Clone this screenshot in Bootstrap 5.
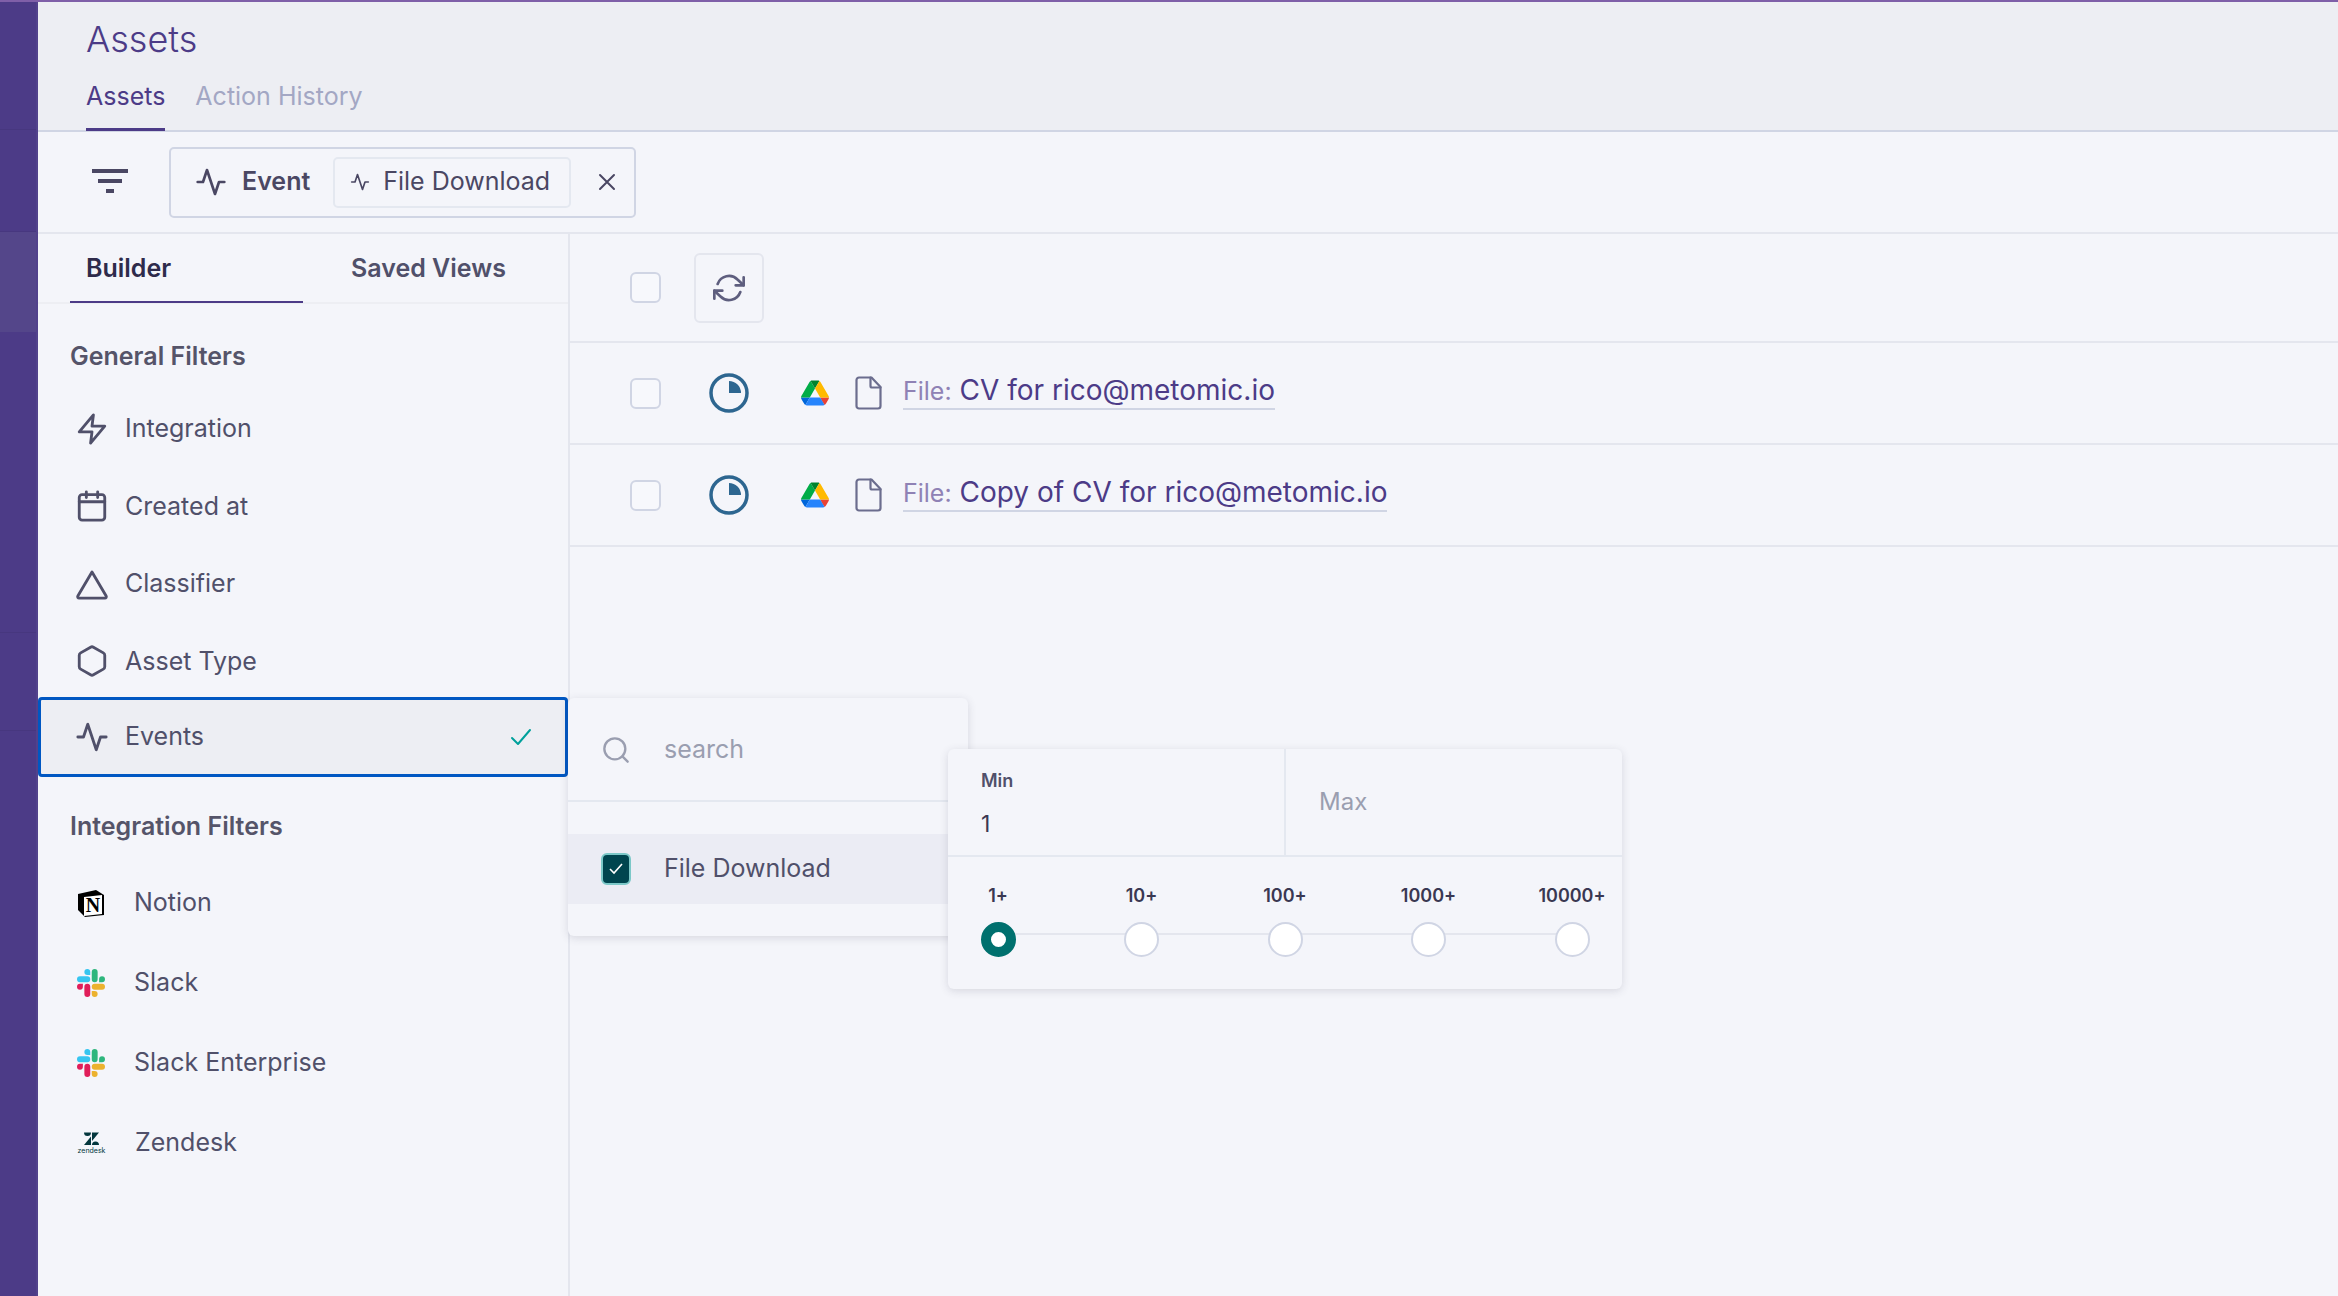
<!DOCTYPE html>
<html lang="en">
<head>
    <meta charset="UTF-8">
    <title>Assets</title>
    <meta name="viewport" content="width=device-width, initial-scale=1">
    <link href="https://cdn.jsdelivr.net/npm/bootstrap@5.3.0/dist/css/bootstrap.min.css" rel="stylesheet">
    <style>
        /* page frame */
        html, body { height: 100%; }
        body {
            background: #f4f5fa;
            color: #50506a;
            font-family: "Inter", "Liberation Sans", sans-serif;
            font-size: 25px;
            overflow: hidden;
        }
        .page-frame { height: 100vh; border-top: 2px solid #7f5fa8; }
        .ico { fill: none; stroke: currentColor; stroke-width: 2; stroke-linecap: round; stroke-linejoin: round; flex: none; }

        /* purple rail */
        .side-rail { width: 38px; flex: none; background: #4c3b87; border-right: 2px solid #52428c; }
        .rail-slot { border-bottom: 1px solid #47377f; }
        .rail-top { height: 128px; }
        .rail-mid { height: 102px; }
        .rail-on { height: 100px; background: #54468a; border-bottom: 0; }
        .rail-a { height: 301px; }
        .rail-b { height: 98px; }

        /* header */
        .top-head { height: 130px; flex: none; background: #edeef3; border-bottom: 2px solid #d0d5e4; padding: 0 48px; }
        .head-title { color: #4c3b87; font-size: 36px; font-weight: 300; line-height: 48px; margin: 13px 0 0; }
        .head-tabs { gap: 30px; margin-top: 9px; }
        .head-tab { color: #a3a7c4; font-size: 25px; font-weight: 400; line-height: 35px; height: 59px; padding-top: 7px; text-decoration: none; }
        .head-tab.is-on { color: #4c3b87; border-bottom: 3px solid #4c3b87; }

        /* filter bar */
        .filter-bar { height: 102px; flex: none; border-bottom: 2px solid #e4e6ee; padding-left: 54px; }
        .filter-lines { width: 36px; color: #4a4763; margin-right: 42px; }
        .filter-chip { height: 71px; width: 467px; margin-left: -1px; border: 2px solid #d0d5e4; border-radius: 5px; padding: 0 12px 0 24px; color: #4a4763; }
        .filter-chip strong { font-weight: 600; margin: 0 23px 0 15px; }
        .value-chip { height: 51px; width: 238px; border: 2px solid #e4e8f0; border-radius: 5px; padding-left: 15px; margin-right: 26px; font-weight: 400; }
        .value-chip svg { margin-right: 13px; }

        /* sidebar */
        .work-area { min-height: 0; }
        .side-panel { width: 532px; flex: none; border-right: 2px solid #e4e6ee; }
        .side-tabs { height: 70px; border-bottom: 2px solid #edeef3; padding-left: 32px; }
        .side-tab { width: 233px; height: 69px; padding: 16px 0 0 16px; font-weight: 600; color: #50506a; text-decoration: none; font-size: 25px; }
        .side-tab.is-on { color: #2e2b4b; border-bottom: 2px solid #4c3b87; }
        .side-tab + .side-tab { padding-left: 48px; }
        .group-label { font-size: 25px; font-weight: 600; color: #555469; margin: 0; padding-left: 32px; line-height: 32px; }
        .group-general { margin-top: 36px; margin-bottom: 18px; }
        .group-integration { margin-top: 33px; margin-bottom: 21px; }
        .filter-list { --bs-list-group-bg: transparent; --bs-list-group-border-width: 0; --bs-list-group-color: #50506a; }
        .filter-item { height: 77.5px; display: flex; align-items: center; padding: 0 0 0 37px; font-weight: 400; }
        .filter-item .ico { margin-right: 16px; color: #50506a; }
        .filter-item.is-open { height: 80px; background: #edeef3; box-shadow: inset 0 0 0 3px #0057c2; border-radius: 4px; margin-top: -3px; }
        .filter-item .filter-tick { margin-left: auto; margin-right: 36px; color: #00a09b; }
        .app-item { height: 80px; padding-left: 39px; }
        .app-item svg { margin-right: 29px; flex: none; }

        /* assets table */
        .asset-pane { min-width: 0; }
        .asset-row { height: 102px; border-bottom: 2px solid #e4e6ee; padding-left: 60px; }
        .asset-tools { height: 109px; }
        .asset-tick.form-check-input { width: 31px; height: 31px; margin: 0; border: 2px solid #d0d5e4; border-radius: 6px; background-color: #f7f8fc; flex: none; }
        .refresh-btn { width: 70px; height: 70px; margin-left: 33px; padding: 0; border: 2px solid #e4e6ee; border-radius: 6px; color: #5e5e7e; background: transparent; }
        .status-clock { margin-left: 48px; margin-right: 52px; flex: none; }
        .type-file { margin: 0 21px 0 26px; color: #6b6d8e; stroke-width: 2.2; }
        .asset-link { font-size: 28px; font-weight: 400; line-height: 34px; color: #4c3b87; text-decoration: none; border-bottom: 2px solid #d0d5e4; margin-top: -4px; }
        .asset-link span { color: #8f82b5; font-size: 25px; }

        /* popups */
        .float-card { position: absolute; background: #f4f5fa; border-radius: 6px; box-shadow: 0 2px 8px rgba(60, 60, 90, .16); }
        .search-card { left: -2px; top: 464px; width: 400px; height: 238px; }
        .search-line { height: 104px; border-bottom: 2px solid #e4e8f0; padding-left: 34px; padding-top: 2px; color: #9a9eb0; font-weight: 400; }
        .search-line .ico { margin-right: 34px; }
        .option-line { height: 70px; margin-top: 32px; background: #ebecf4; padding-left: 33px; font-weight: 400; }
        .option-tick { width: 30px; height: 32px; border-radius: 6px; background: #00454f; border: 2px solid #7cc8c8; margin-right: 33px; }
        .range-card { left: 378px; top: 515px; width: 674px; height: 240px; }
        .range-top { height: 108px; border-bottom: 2px solid #e4e8f0; }
        .range-cell { flex: 1 1 0; padding: 0 33px; }
        .range-cell + .range-cell { border-left: 2px solid #e4e8f0; }
        .range-label { font-size: 18px; font-weight: 600; color: #50506a; line-height: 24px; margin-top: 20px; }
        .range-value { font-size: 23px; font-weight: 400; line-height: 30px; color: #3a3852; margin-top: 16px; }
        .range-hint { font-size: 24px; font-weight: 400; color: #9a9eb0; }
        .range-steps { position: relative; padding: 27px 12px 0; }
        .range-steps::before { content: ""; position: absolute; left: 51px; right: 51px; top: 76px; height: 2px; background: #e4e6ee; }
        .range-step { width: 76px; position: relative; font-size: 18px; font-weight: 600; color: #3a3852; line-height: 24px; }
        .step-dot { display: block; width: 35px; height: 35px; margin: 14px auto 0; border-radius: 50%; background: #fff; border: 2px solid #d0d5e4; }
        .step-dot.is-on { border: 10px solid #00706e; }
    </style>
</head>
<body>

    <!-- shared icons -->
    <svg width="0" height="0" class="position-absolute">
        <symbol id="i-activity" viewBox="0 0 24 24"><path d="M22 12h-4l-3 9L9 3l-3 9H2"/></symbol>
        <symbol id="i-slack" viewBox="0 0 24 24">
            <path fill="#e01e5a" d="M5.042 15.165a2.528 2.528 0 0 1-2.52 2.523A2.528 2.528 0 0 1 0 15.165a2.527 2.527 0 0 1 2.522-2.52h2.52v2.52zM6.313 15.165a2.527 2.527 0 0 1 2.521-2.52 2.527 2.527 0 0 1 2.521 2.52v6.313A2.528 2.528 0 0 1 8.834 24a2.528 2.528 0 0 1-2.521-2.522v-6.313z"/>
            <path fill="#36c5f0" d="M8.834 5.042a2.528 2.528 0 0 1-2.521-2.52A2.528 2.528 0 0 1 8.834 0a2.528 2.528 0 0 1 2.521 2.522v2.52H8.834zM8.834 6.313a2.528 2.528 0 0 1 2.521 2.521 2.528 2.528 0 0 1-2.521 2.521H2.522A2.528 2.528 0 0 1 0 8.834a2.528 2.528 0 0 1 2.522-2.521h6.312z"/>
            <path fill="#2eb67d" d="M18.956 8.834a2.528 2.528 0 0 1 2.522-2.521A2.528 2.528 0 0 1 24 8.834a2.528 2.528 0 0 1-2.522 2.521h-2.522V8.834zM17.688 8.834a2.528 2.528 0 0 1-2.523 2.521 2.527 2.527 0 0 1-2.52-2.521V2.522A2.527 2.527 0 0 1 15.165 0a2.528 2.528 0 0 1 2.523 2.522v6.312z"/>
            <path fill="#ecb22e" d="M15.165 18.956a2.528 2.528 0 0 1 2.523 2.522A2.528 2.528 0 0 1 15.165 24a2.527 2.527 0 0 1-2.52-2.522v-2.522h2.52zM15.165 17.688a2.527 2.527 0 0 1-2.52-2.523 2.526 2.526 0 0 1 2.52-2.52h6.313A2.527 2.527 0 0 1 24 15.165a2.528 2.528 0 0 1-2.522 2.523h-6.313z"/>
        </symbol>
        <symbol id="i-drive" viewBox="0 0 87.3 78">
            <path d="m6.6 66.85 3.85 6.65c.8 1.4 1.95 2.5 3.3 3.3l13.75-23.8h-27.5c0 1.55.4 3.1 1.2 4.5z" fill="#0066da"/>
            <path d="m43.65 25-13.75-23.8c-1.35.8-2.5 1.9-3.3 3.3l-25.4 44a9.06 9.06 0 0 0 -1.2 4.5h27.5z" fill="#00ac47"/>
            <path d="m73.55 76.8c1.35-.8 2.5-1.9 3.3-3.3l1.6-2.75 7.65-13.25c.8-1.4 1.2-2.95 1.2-4.5h-27.502l5.852 11.5z" fill="#ea4335"/>
            <path d="m43.65 25 13.75-23.8c-1.35-.8-2.9-1.2-4.5-1.2h-18.5c-1.6 0-3.15.45-4.5 1.2z" fill="#00832d"/>
            <path d="m59.8 53h-32.3l-13.75 23.8c1.35.8 2.9 1.2 4.5 1.2h50.8c1.6 0 3.15-.45 4.5-1.2z" fill="#2684fc"/>
            <path d="m73.4 26.5-12.7-22c-.8-1.4-1.95-2.5-3.3-3.3l-13.75 23.8 16.15 28h27.45c0-1.55-.4-3.1-1.2-4.5z" fill="#ffba00"/>
        </symbol>
        <symbol id="i-clock" viewBox="0 0 40 40">
            <circle cx="20" cy="20" r="18" fill="none" stroke="#2d6690" stroke-width="3.5"/>
            <path d="M20 8a12 12 0 0 1 12 12H20z" fill="#2d6690"/>
        </symbol>
        <symbol id="i-file" viewBox="0 0 27 34">
            <path d="M4 1.5h12.5L25.5 11v19a2.5 2.5 0 0 1-2.5 2.5H4A2.5 2.5 0 0 1 1.5 30V4A2.5 2.5 0 0 1 4 1.5z"/>
            <path d="M15.5 1.5V10a1.5 1.5 0 0 0 1.5 1.5h8.5"/>
        </symbol>
    </svg>

    <div class="page-frame d-flex">
        <!-- purple rail -->
        <aside class="side-rail d-flex flex-column">
            <div class="rail-slot rail-top"></div>
            <div class="rail-slot rail-mid"></div>
            <div class="rail-slot rail-on"></div>
            <div class="rail-slot rail-a"></div>
            <div class="rail-slot rail-b"></div>
        </aside>

        <div class="flex-grow-1 d-flex flex-column" style="min-width:0">
            <!-- header -->
            <header class="top-head">
                <h1 class="head-title">Assets</h1>
                <div class="head-tabs d-flex">
                    <a href="#" class="head-tab is-on">Assets</a>
                    <a href="#" class="head-tab">Action History</a>
                </div>
            </header>

            <!-- active filter -->
            <div class="filter-bar d-flex align-items-center">
                <svg class="filter-lines" width="36" height="26" viewBox="0 0 36 26" fill="currentColor"><rect y="0" width="36" height="4"/><rect x="6" y="10" width="24" height="4"/><rect x="14" y="20" width="8" height="4"/></svg>
                <div class="filter-chip d-flex align-items-center">
                    <svg class="ico" width="32" height="32"><use href="#i-activity"/></svg>
                    <strong>Event</strong>
                    <div class="value-chip d-flex align-items-center">
                        <svg class="ico" width="20" height="20"><use href="#i-activity"/></svg>
                        File Download
                    </div>
                    <svg class="ico" width="20" height="20" viewBox="0 0 20 20" stroke-width="2.4"><path d="M3 3l14 14M17 3L3 17"/></svg>
                </div>
            </div>

            <div class="work-area flex-grow-1 d-flex">
                <!-- filter builder -->
                <nav class="side-panel">
                    <div class="side-tabs d-flex">
                        <a href="#" class="side-tab is-on">Builder</a>
                        <a href="#" class="side-tab">Saved Views</a>
                    </div>
                    <h2 class="group-label group-general">General Filters</h2>
                    <div class="list-group list-group-flush filter-list">
                        <div class="list-group-item filter-item">
                            <svg class="ico" width="34" height="34" viewBox="0 0 24 24" stroke-width="1.7"><path d="M13 2L3 14h9l-1 8 10-12h-9l1-8z"/></svg>Integration
                        </div>
                        <div class="list-group-item filter-item">
                            <svg class="ico" width="34" height="34" viewBox="0 0 24 24" stroke-width="1.7"><rect x="3" y="4" width="18" height="18" rx="2"/><path d="M16 2v4M8 2v4M3 9h18"/></svg>Created at
                        </div>
                        <div class="list-group-item filter-item">
                            <svg class="ico" width="34" height="34" viewBox="0 0 24 24" stroke-width="1.7"><path d="M12 3.5l10 17a1 1 0 0 1-.9 1.5H2.900a1 1 0 0 1-.9-1.500z"/></svg>Classifier
                        </div>
                        <div class="list-group-item filter-item">
                            <svg class="ico" width="34" height="34" viewBox="0 0 24 24" stroke-width="1.7"><path d="M21 16V8a2 2 0 0 0-1-1.730l-7-4a2 2 0 0 0-2 0l-7 4A2 2 0 0 0 3 8v8a2 2 0 0 0 1 1.730l7 4a2 2 0 0 0 2 0l7-4A2 2 0 0 0 21 16z"/></svg>Asset Type
                        </div>
                        <div class="list-group-item filter-item is-open">
                            <svg class="ico" width="34" height="34" stroke-width="1.7"><use href="#i-activity"/></svg>Events
                            <svg class="ico filter-tick" width="22" height="18" viewBox="0 0 22 18" stroke-width="2.4"><path d="M2 10l6 6L20 2"/></svg>
                        </div>
                    </div>
                    <h2 class="group-label group-integration">Integration Filters</h2>
                    <div class="list-group list-group-flush filter-list">
                        <div class="list-group-item filter-item app-item">
                            <svg width="28" height="29" viewBox="0 0 28 29">
                                <path d="M1 5L19 1l8 5v20L8 28l-7-7z" fill="#000"/>
                                <path d="M7 8l18-2v19L7 27z" fill="#fff"/>
                                <text x="16" y="23" text-anchor="middle" font-family="Liberation Serif" font-weight="700" font-size="20" fill="#000">N</text>
                            </svg>Notion
                        </div>
                        <div class="list-group-item filter-item app-item">
                            <svg width="28" height="28"><use href="#i-slack"/></svg>Slack
                        </div>
                        <div class="list-group-item filter-item app-item">
                            <svg width="28" height="28"><use href="#i-slack"/></svg>Slack Enterprise
                        </div>
                        <div class="list-group-item filter-item app-item">
                            <svg width="29" height="22" viewBox="0 0 29 22">
                                <path d="M14 4.500V13H7zM15 0.500h7L15 9zM7 0.500h7a3.500 3.500 0 0 1-7 0zM15 13a3.500 3.500 0 0 1 7 0z" fill="#03363d"/>
                                <text x="14.500" y="21" text-anchor="middle" font-family="Inter" font-size="7" fill="#03363d">zendesk</text>
                            </svg>Zendesk
                        </div>
                    </div>
                </nav>

                <!-- asset list -->
                <main class="asset-pane flex-grow-1 position-relative">
                    <div class="asset-row asset-tools d-flex align-items-center">
                        <input class="form-check-input asset-tick" type="checkbox">
                        <button class="btn refresh-btn d-flex align-items-center justify-content-center" type="button">
                            <svg class="ico" width="32" height="32" viewBox="0 0 24 24"><path d="M23 4v6h-6M1 20v-6h6"/><path d="M3.510 9a9 9 0 0 1 14.850-3.360L23 10M1 14l4.640 4.360A9 9 0 0 0 20.490 15"/></svg>
                        </button>
                    </div>
                    <div class="asset-row d-flex align-items-center">
                        <input class="form-check-input asset-tick" type="checkbox">
                        <svg class="status-clock" width="40" height="40"><use href="#i-clock"/></svg>
                        <svg width="28" height="26"><use href="#i-drive"/></svg>
                        <svg class="ico type-file" width="27" height="34"><use href="#i-file"/></svg>
                        <a href="#" class="asset-link"><span>File:</span> CV for rico@metomic.io</a>
                    </div>
                    <div class="asset-row d-flex align-items-center">
                        <input class="form-check-input asset-tick" type="checkbox">
                        <svg class="status-clock" width="40" height="40"><use href="#i-clock"/></svg>
                        <svg width="28" height="26"><use href="#i-drive"/></svg>
                        <svg class="ico type-file" width="27" height="34"><use href="#i-file"/></svg>
                        <a href="#" class="asset-link"><span>File:</span> Copy of CV for rico@metomic.io</a>
                    </div>

                    <!-- event picker menu -->
                    <div class="float-card search-card">
                        <div class="search-line d-flex align-items-center">
                            <svg class="ico" width="28" height="28" viewBox="0 0 24 24"><circle cx="11" cy="11" r="9"/><path d="M22 22l-4.500-4.500"/></svg>search
                        </div>
                        <div class="option-line d-flex align-items-center">
                            <span class="option-tick d-flex align-items-center justify-content-center">
                                <svg width="16" height="14" viewBox="0 0 16 14" fill="none" stroke="#fff" stroke-width="1.600"><path d="M2 7l4 4 8-9"/></svg>
                            </span>File Download
                        </div>
                    </div>

                    <!-- count range menu -->
                    <div class="float-card range-card">
                        <div class="range-top d-flex">
                            <div class="range-cell">
                                <div class="range-label">Min</div>
                                <div class="range-value">1</div>
                            </div>
                            <div class="range-cell d-flex align-items-center">
                                <span class="range-hint">Max</span>
                            </div>
                        </div>
                        <div class="range-steps d-flex justify-content-between">
                            <div class="range-step text-center">1+<span class="step-dot is-on"></span></div>
                            <div class="range-step text-center">10+<span class="step-dot"></span></div>
                            <div class="range-step text-center">100+<span class="step-dot"></span></div>
                            <div class="range-step text-center">1000+<span class="step-dot"></span></div>
                            <div class="range-step text-center">10000+<span class="step-dot"></span></div>
                        </div>
                    </div>
                </main>
            </div>
        </div>
    </div>

    <script src="https://cdn.jsdelivr.net/npm/bootstrap@5.3.0/dist/js/bootstrap.bundle.min.js"></script>
</body>
</html>
